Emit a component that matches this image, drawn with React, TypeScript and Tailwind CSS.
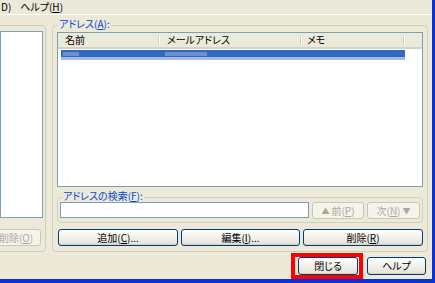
import React from 'react'

const font = "font-['Noto_Sans_CJK_JP','Noto_Sans',sans-serif] [font-feature-settings:'palt']"

function XpButton({ children, className = "", disabled = false }: { children: React.ReactNode; className?: string; disabled?: boolean }) {
  if (disabled) {
    return (
      <div className={"h-[17px] flex items-center justify-center rounded-[3px] border border-[#C9C7BA] bg-[#F5F4EA] text-[#ACA899] text-[10px] leading-none " + className}>
        {children}
      </div>
    )
  }
  return (
    <div className={"h-[17px] flex items-center justify-center rounded-[3px] border border-[#003C74] bg-gradient-to-b from-white to-[#E3E1D6] shadow-[inset_0_-1px_0_#D6D0C5,inset_0_1px_0_#FFFFFF] text-black text-[10px] leading-none " + className}>
      {children}
    </div>
  )
}

function U({ children }: { children: React.ReactNode }) {
  return <span className="underline underline-offset-1">{children}</span>
}

export default function App() {
  return (
    <div className={"w-[435px] h-[283px] overflow-hidden bg-[#ECE9D8] flex flex-col " + font}>
      <div className="flex flex-col h-[279px] w-[435px] border-r-[3px] border-[#0831D9]">
        {/* menu bar */}
        <div className="h-[15px] border-b border-white flex items-center text-[10px] leading-none text-black">
          <span className="ml-[1px]">D)</span>
          <span className="ml-[9px]">ヘルプ(<U>H</U>)</span>
        </div>

        <div className="flex mt-[10px] h-[227px]">
          {/* left group */}
          <div className="ml-[-5px] w-[51px] h-[227px] border border-[#D0D0BF] rounded-[4px] pl-[4px] pt-[5px] flex flex-col overflow-hidden">
            <div className="w-[43px] h-[187px] bg-white border border-[#7F9DB9] shrink-0" />
            <XpButton disabled className="mt-[11px] ml-[-9px] w-[50px] shrink-0">削除(<U>O</U>)</XpButton>
          </div>

          {/* right group */}
          <div className="relative ml-[6px] w-[376px] h-[227px] border border-[#D0D0BF] rounded-[4px] pl-[4px] pt-[6px] flex flex-col">
            <span className="absolute left-[5px] top-[-7px] px-[1px] bg-[#ECE9D8] text-[10px] leading-none text-[#0046D5]">
              アドレス(<U>A</U>):
            </span>

            {/* list */}
            <div className="w-[366px] h-[155px] bg-white border border-[#7F9DB9] flex flex-col shrink-0">
              <div className="h-[16px] flex bg-[#EBEADB] border-b-2 border-[#D6D2C2] text-[10px] leading-none text-black">
                <div className="w-[102px] flex items-center pl-[7px] relative">
                  名前
                  <div className="absolute right-0 top-[3px] h-[9px] w-[2px] border-l border-[#D2CFBF] border-r border-r-white" />
                </div>
                <div className="w-[142px] flex items-center pl-[7px] relative">
                  メールアドレス
                  <div className="absolute right-0 top-[3px] h-[9px] w-[2px] border-l border-[#D2CFBF] border-r border-r-white" />
                </div>
                <div className="w-[103px] flex items-center pl-[5px] relative">
                  メモ
                  <div className="absolute right-0 top-[3px] h-[9px] w-[2px] border-l border-[#D2CFBF] border-r border-r-white" />
                </div>
              </div>
              <div className="mt-[1px] ml-[3px] w-[344px] h-[10px] bg-[#316AC5] flex flex-col">
                <div className="h-[7px] flex items-center">
                  <div className="ml-[2px] w-[16px] h-[4px] bg-[#6F8FD0]" />
                  <div className="ml-[86px] w-[42px] h-[4px] bg-[#6F8FD0]" />
                </div>
                <div className="h-[3px] bg-[#A9BBDD]" />
              </div>
            </div>

            {/* search group */}
            <div className="relative mt-[10px] w-[366px] h-[26px] border border-[#D0D0BF] rounded-[4px] pl-[2px] pt-[4px] flex shrink-0">
              <span className="absolute left-[4px] top-[-7px] px-[1px] bg-[#ECE9D8] text-[10px] leading-none text-[#0046D5]">
                アドレスの検索(<U>F</U>):
              </span>
              <div className="w-[249px] h-[16px] bg-white border border-[#7F9DB9]" />
              <XpButton disabled className="ml-[3px] w-[52px]">
                <span className="text-[8px] mr-[2px]">▲</span>前(<U>P</U>)
              </XpButton>
              <XpButton disabled className="ml-[3px] w-[53px]">
                次(<U>N</U>)<span className="text-[8px] ml-[2px]">▼</span>
              </XpButton>
            </div>

            {/* action buttons */}
            <div className="flex mt-[6px] ml-[1px] gap-[3px]">
              <XpButton className="w-[120px]">追加(<U>C</U>)...</XpButton>
              <XpButton className="w-[119px]">編集(<U>I</U>)...</XpButton>
              <XpButton className="w-[120px]">削除(<U>R</U>)</XpButton>
            </div>
          </div>
        </div>

        {/* bottom row */}
        <div className="mt-[1px] h-[26px] flex items-center">
          <div className="ml-[291px] w-[72px] h-[26px] border-[4px] border-[#FF0000] flex items-center pl-[3px]">
            <XpButton className="w-[60px] h-[18px]">閉じる</XpButton>
          </div>
          <XpButton className="ml-[4px] w-[59px] h-[18px]">ヘルプ</XpButton>
        </div>
      </div>
      <div className="h-[4px] bg-[#0831D9]" />
    </div>
  )
}
